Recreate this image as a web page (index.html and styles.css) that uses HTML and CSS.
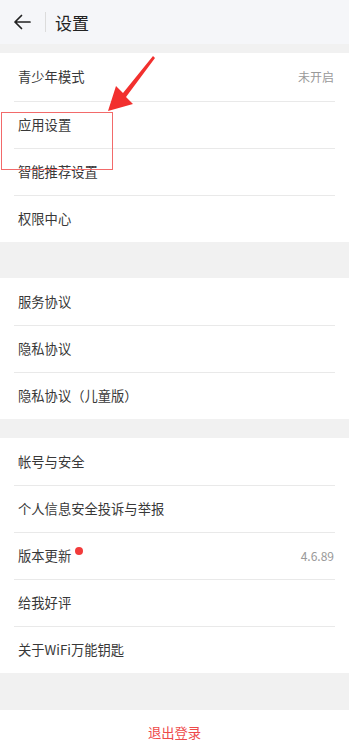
FILE: index.html
```html
<!DOCTYPE html>
<html lang="zh-CN">
<head>
<meta charset="utf-8">
<title>设置</title>
<link rel="stylesheet" href="styles.css">
</head>
<body>
<div class="page">
  <header class="topbar">
    <svg class="back" width="18" height="16" viewBox="0 0 18 16">
      <path d="M17 8H2M8.5 1.5L2 8l6.5 6.5" fill="none" stroke="#222" stroke-width="1.7" stroke-linecap="round" stroke-linejoin="round"/>
    </svg>
    <span class="vline"></span>
    <h1 class="title">设置</h1>
  </header>

  <section class="group g1">
    <div class="row"><span class="label">青少年模式</span><span class="value">未开启</span></div>
    <div class="row"><span class="label">应用设置</span></div>
    <div class="row"><span class="label">智能推荐设置</span></div>
    <div class="row"><span class="label">权限中心</span></div>
  </section>

  <section class="group g2">
    <div class="row"><span class="label">服务协议</span></div>
    <div class="row"><span class="label">隐私协议</span></div>
    <div class="row"><span class="label">隐私协议（儿童版）</span></div>
  </section>

  <section class="group g3">
    <div class="row"><span class="label">帐号与安全</span></div>
    <div class="row"><span class="label">个人信息安全投诉与举报</span></div>
    <div class="row"><span class="label">版本更新<span class="dot"></span></span><span class="value">4.6.89</span></div>
    <div class="row"><span class="label">给我好评</span></div>
    <div class="row"><span class="label">关于WiFi万能钥匙</span></div>
  </section>

  <section class="logout">退出登录</section>

  <div class="mark-box"></div>
  <svg class="mark-arrow" width="60" height="62" viewBox="0 0 60 62">
    <path d="M48 1 L50 3 L21 42 L28 49 L3 56 L11 31 L18 38 Z" fill="#f2302e"/>
  </svg>
</div>
</body>
</html>
```

FILE: styles.css
```css
* { box-sizing: border-box; margin: 0; padding: 0; }
html, body { width: 349px; height: 748px; overflow: hidden; }
body {
  background: #f1f1f1;
  font-family: "Noto Sans CJK SC", "Noto Sans", sans-serif;
  color: #333;
}
.page { position: relative; width: 349px; height: 748px; }
.topbar {
  height: 44px;
  background: #f5f6f9;
  display: flex;
  align-items: center;
  padding-left: 13px;
}
.back { display: block; }
.vline {
  width: 1px;
  height: 20px;
  background: #dcdcdc;
  margin-left: 14px;
  margin-right: 9px;
}
.title {
  font-size: 17px;
  font-weight: 400;
  color: #222;
  line-height: 1;
}
.group { background: #fff; }
.g1 { margin-top: 9px; }
.g1 .row:first-child { height: 48px; }
.g2 { margin-top: 36px; }
.g3 { margin-top: 19px; }
.row {
  height: 47px;
  margin: 0 14px;
  padding: 0 1px 0 4px;
  display: flex;
  align-items: center;
  justify-content: space-between;
  border-top: 1px solid #e9e9e9;
}
.row:first-child { border-top: none; }
.label {
  font-size: 13.3px;
  color: #383838;
  position: relative;
  line-height: 1;
}
.value {
  font-size: 12px;
  color: #999;
  line-height: 1;
}
.dot {
  position: absolute;
  right: -12px;
  top: -2px;
  width: 8px;
  height: 8px;
  border-radius: 50%;
  background: #f23b3b;
}
.logout {
  margin-top: 37px;
  height: 38px;
  background: #fff;
  display: flex;
  align-items: center;
  justify-content: center;
  font-size: 13.3px;
  color: #ee4a4a;
  padding-top: 6px;
}
.mark-box {
  position: absolute;
  left: 1px;
  top: 112px;
  width: 112px;
  height: 58px;
  border: 1.5px solid #f26a6a;
}
.mark-arrow {
  position: absolute;
  left: 105px;
  top: 55px;
}
```
